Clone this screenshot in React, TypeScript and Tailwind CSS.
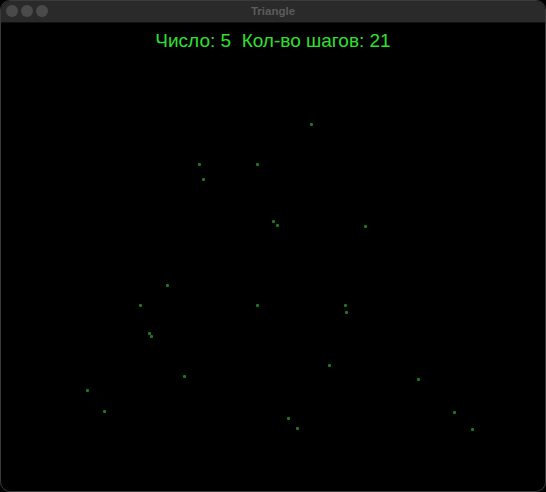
const dots: [number, number][] = [
  [311.5, 123.7],
  [199, 163.7],
  [257.7, 163.7],
  [203, 178],
  [273.3, 220],
  [277.3, 224.7],
  [365.3, 225.3],
  [167.7, 284.3],
  [140.3, 304.3],
  [257.7, 304.3],
  [345, 304.3],
  [346.7, 311.7],
  [149.3, 332.5],
  [151, 335],
  [329.5, 364.7],
  [184.3, 375],
  [418.3, 378],
  [87.3, 389.7],
  [104.7, 410],
  [454.3, 411.5],
  [288.7, 417.7],
  [297.3, 427.5],
  [472, 428]
]

export default function App() {
  return (
    <div className="h-[492px] w-[546px] bg-black">
      <div className="flex h-full w-full flex-col overflow-hidden rounded-[10px] border border-[#3a3a3a] bg-black">
        <div className="relative flex h-[21px] shrink-0 items-center justify-center bg-[#2a2a2a]">
          <div className="absolute left-[5px] top-[4px] flex gap-[3px]">
            <span className="h-[12px] w-[12px] rounded-full bg-[#4a4a4a]" />
            <span className="h-[12px] w-[12px] rounded-full bg-[#4a4a4a]" />
            <span className="h-[12px] w-[12px] rounded-full bg-[#4a4a4a]" />
          </div>
          <span className="font-['Liberation_Sans',Arial,sans-serif] text-[11.5px] font-bold text-[#5c5c5c]">
            Triangle
          </span>
        </div>
        <div className="relative flex-1 border-t border-[#111]">
          <div className="pt-[5px] text-center font-['Liberation_Sans',Arial,sans-serif] text-[19px] leading-[26px] whitespace-pre text-[#2ee02e]">
            {'Число: 5  Кол-во шагов: 21'}
          </div>
          {dots.map(([x, y], i) => (
            <span
              key={i}
              className="absolute h-[3px] w-[3px] rounded-[1px] bg-[#1d7a1d]"
              style={{ left: x - 1.5 - 1, top: y - 1.5 - 22 }}
            />
          ))}
        </div>
      </div>
    </div>
  )
}
